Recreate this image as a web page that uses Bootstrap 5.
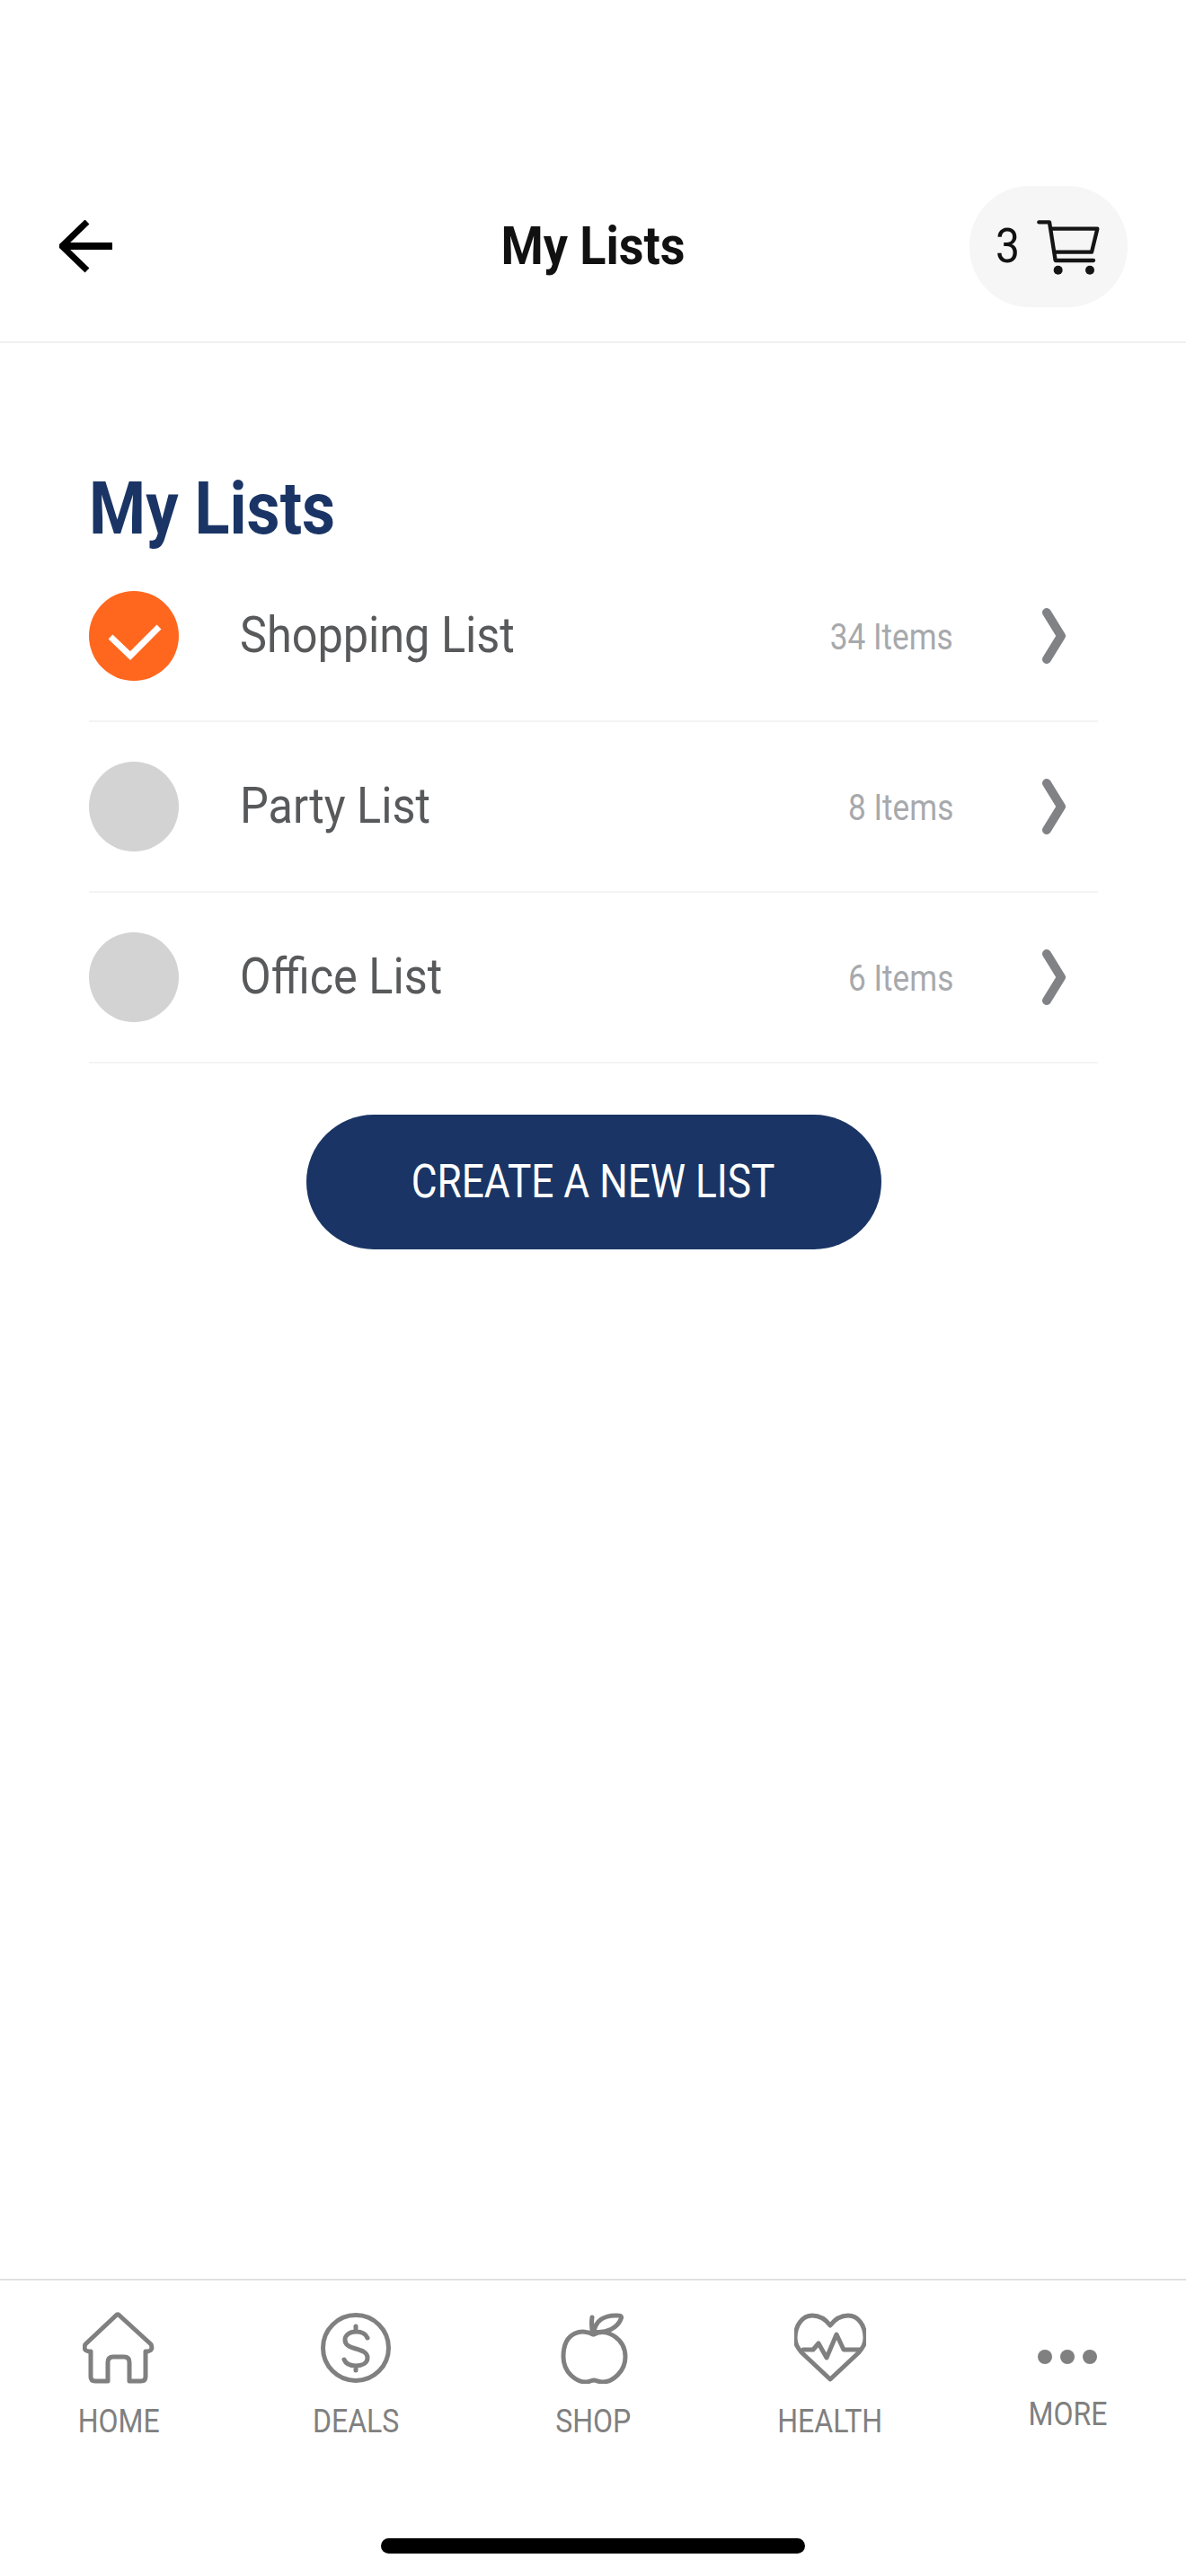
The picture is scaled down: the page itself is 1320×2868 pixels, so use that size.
<!DOCTYPE html>
<html lang="en">
<head>
<meta charset="utf-8">
<title>My Lists</title>
<link href="https://cdn.jsdelivr.net/npm/bootstrap@5.3.0/dist/css/bootstrap.min.css" rel="stylesheet">
<style>
  html, body { margin: 0; background: #fff; }
  body { font-family: Roboto, "Liberation Sans", sans-serif; }
  .screen { width: 1320px; height: 2868px; overflow: hidden; }

  /* Narrowed Roboto, standing in for a condensed cut */
  .narrow { display: inline-block; white-space: nowrap; transform: scaleX(.89); line-height: 1.2; }
  .from-left { transform-origin: left center; }
  .from-right { transform-origin: right center; }

  .top-bar { height: 382px; padding: 207px 66px 0; border-bottom: 2px solid #f0f0f0; }
  .top-row { height: 135px; }
  .top-title { font-size: 60px; font-weight: 700; color: #111; transform: scaleX(.9); margin-top: -3px; }
  .cart-pill { width: 176px; height: 135px; border-radius: 67px; background: #f6f6f6; margin-right: -1px; padding-left: 29px; }
  .cart-count { font-size: 54px; color: #111; }
  .cart-glyph { margin-left: 15px; }

  .page-head { font-size: 82px; font-weight: 700; color: #1a3565; margin: 0; padding: 136px 0 0 0; height: 232px; line-height: 96px; }
  .page-head .narrow { transform: scaleX(.88); line-height: 96px; }
  .lists-wrap { padding: 0 98px 0 99px; }
  .list-group-flush > .list-line,
  .list-group-flush > .list-line:last-child { height: 190px; padding: 0; border-color: #f4f4f4; border-width: 0 0 2px; border-style: solid; }
  .tick { width: 100px; height: 100px; background: #d3d3d3; }
  .tick.is-on { background: #ff671f; }
  .line-name { font-size: 56px; color: #58595b; margin-left: 68px; transform: scaleX(.9); }
  .line-count { font-size: 40px; color: #a7a9ac; margin-top: 4px; transform: scaleX(.88); }
  .chev { margin-left: 98px; margin-right: 35px; }

  .new-list { width: 640px; height: 150px; background: #1a3565; border: 0; color: #fff; font-size: 52px; margin-top: 57px; padding: 0; }
  .new-list:hover { background: #1a3565; color: #fff; }
  .new-list .narrow { transform: scaleX(.85); }

  .tab-bar { height: 331px; border-top: 2px solid #e0e0e0; padding-top: 35px; }
  .tab-cell { color: #808080; }
  .tab-glyph { width: 80px; height: 80px; margin: 0 auto; display: block; }
  .tab-word { font-size: 36px; margin-top: 21px; }
  .tab-word.is-lifted { margin-top: 13px; }
  .home-pill { width: 472px; height: 17px; border-radius: 9px; background: #000; margin: 0 auto 25px; }
  .line-art { fill: none; stroke: #808080; stroke-width: 5; stroke-linejoin: round; stroke-linecap: round; }
</style>
</head>
<body>
<div class="screen d-flex flex-column">

  <header class="top-bar">
    <div class="top-row d-flex align-items-center justify-content-between position-relative">
      <svg width="60" height="60" viewBox="0 0 60 60" aria-label="Back">
        <path d="M59 29H6" fill="none" stroke="#000" stroke-width="8"/>
        <path d="M31 2 3 29l28 27" fill="none" stroke="#000" stroke-width="7"/>
      </svg>
      <div class="position-absolute top-50 start-50 translate-middle">
        <span class="narrow top-title">My Lists</span>
      </div>
      <div class="cart-pill d-flex align-items-center">
        <span class="narrow from-left cart-count">3</span>
        <svg class="cart-glyph" width="72" height="64" viewBox="270 155 216 192">
          <path d="M280 168H315L335 296H462M322 190H475L456 268H336" fill="none" stroke="#151515" stroke-width="13" stroke-linecap="round" stroke-linejoin="round"/>
          <circle cx="344" cy="328" r="15" fill="#151515"/>
          <circle cx="450" cy="328" r="15" fill="#151515"/>
        </svg>
      </div>
    </div>
  </header>

  <main class="flex-grow-1">
    <div class="lists-wrap">
      <h1 class="page-head"><span class="narrow from-left">My Lists</span></h1>
      <ul class="list-group list-group-flush">
        <li class="list-group-item list-line d-flex align-items-center">
          <span class="tick is-on rounded-circle flex-shrink-0 d-block">
            <svg width="100" height="100" viewBox="0 0 100 100"><path d="M24 51 46 72 78 40" fill="none" stroke="#fff" stroke-width="7"/></svg>
          </span>
          <span class="narrow from-left line-name">Shopping List</span>
          <span class="narrow from-right line-count ms-auto">34 Items</span>
          <svg class="chev" width="28" height="62" viewBox="0 0 28 62"><path d="M6 5 22 31 6 57" fill="none" stroke="#808285" stroke-width="10" stroke-linecap="round" stroke-linejoin="round"/></svg>
        </li>
        <li class="list-group-item list-line d-flex align-items-center">
          <span class="tick rounded-circle flex-shrink-0 d-block"></span>
          <span class="narrow from-left line-name">Party List</span>
          <span class="narrow from-right line-count ms-auto">8 Items</span>
          <svg class="chev" width="28" height="62" viewBox="0 0 28 62"><path d="M6 5 22 31 6 57" fill="none" stroke="#808285" stroke-width="10" stroke-linecap="round" stroke-linejoin="round"/></svg>
        </li>
        <li class="list-group-item list-line d-flex align-items-center">
          <span class="tick rounded-circle flex-shrink-0 d-block"></span>
          <span class="narrow from-left line-name">Office List</span>
          <span class="narrow from-right line-count ms-auto">6 Items</span>
          <svg class="chev" width="28" height="62" viewBox="0 0 28 62"><path d="M6 5 22 31 6 57" fill="none" stroke="#808285" stroke-width="10" stroke-linecap="round" stroke-linejoin="round"/></svg>
        </li>
      </ul>
      <div class="text-center">
        <button type="button" class="btn new-list rounded-pill"><span class="narrow">CREATE A NEW LIST</span></button>
      </div>
    </div>
  </main>

  <footer class="tab-bar d-flex flex-column">
    <nav class="nav nav-justified text-center flex-grow-1 align-items-start">
      <div class="nav-item tab-cell">
        <svg class="tab-glyph" viewBox="0 0 80 80"><path class="line-art" d="M37 4Q39 1.500 41 4L76 36Q79 43 72 44H70V72Q70 77 65 77H52V56Q52 50 46 50H34Q28 50 28 56V77H14Q9 77 9 72V44H7Q0 43 3 36Z"/></svg>
        <span class="narrow tab-word">HOME</span>
      </div>
      <div class="nav-item tab-cell">
        <svg class="tab-glyph" viewBox="0 0 80 80"><circle class="line-art" cx="40" cy="40" r="36.500"/><path class="line-art" d="M53 29C51 24 46 22 40 22 33 22 28 26 28 31 28 37 33 39 40 41 47 43 53 45 53 51 53 57 47 60 40 60 34 60 29 58 27 53M40 16V22M40 60V65"/></svg>
        <span class="narrow tab-word">DEALS</span>
      </div>
      <div class="nav-item tab-cell">
        <svg class="tab-glyph" viewBox="0 0 80 80"><path class="line-art" d="M40 25C30 19 7 20 7 50 7 68 22 78 32 78 37 78 38 76 41 76 44 76 46 78 51 78 62 78 76 66 76 50 76 30 55 17 41 25M39 20Q38 12 39 6M41 22C43 10 52 3 68 4 72 4 72 6 71 8 67 18 55 24 41 22"/></svg>
        <span class="narrow tab-word">SHOP</span>
      </div>
      <div class="nav-item tab-cell">
        <svg class="tab-glyph" viewBox="0 0 80 80"><path class="line-art" d="M40 15C34 7 28 4 20 4 9 4 1 15 1 29 1 36 4 40 8 45L40 75 72 45C76 40 79 36 79 29 79 15 71 4 60 4 52 4 46 7 40 15Z"/><path class="line-art" d="M10 42H21L27 35 36 51 47 25 55 42H73"/></svg>
        <span class="narrow tab-word">HEALTH</span>
      </div>
      <div class="nav-item tab-cell">
        <svg class="tab-glyph" viewBox="0 0 80 80"><circle cx="15" cy="50" r="8" fill="#808080"/><circle cx="40" cy="50" r="8" fill="#808080"/><circle cx="65" cy="50" r="8" fill="#808080"/></svg>
        <span class="narrow tab-word is-lifted">MORE</span>
      </div>
    </nav>
    <div class="home-pill"></div>
  </footer>
</div>
<script src="https://cdn.jsdelivr.net/npm/bootstrap@5.3.0/dist/js/bootstrap.bundle.min.js"></script>
</body>
</html>
